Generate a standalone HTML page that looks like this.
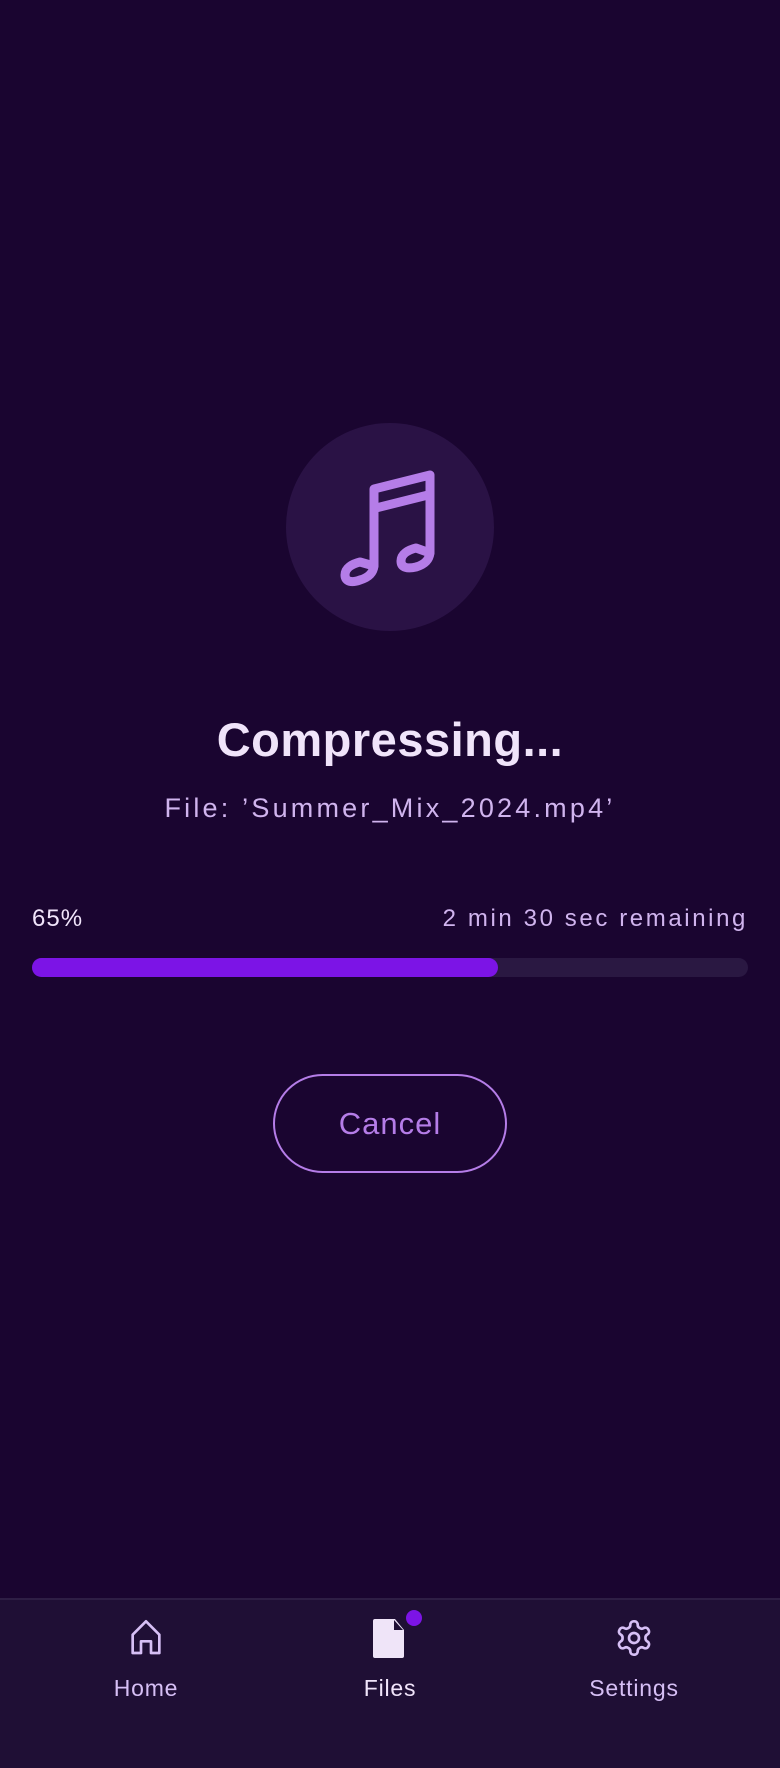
<!DOCTYPE html>
<html><head><meta charset="utf-8"><style>
*{margin:0;padding:0;box-sizing:border-box}
body{width:780px;height:1768px;background:#1a0530;font-family:"Liberation Sans",sans-serif;position:relative;overflow:hidden}
.circle{position:absolute;left:286px;top:423px;width:208px;height:208px;border-radius:50%;background:#2a1245}
.title{position:absolute;left:0;width:780px;top:712px;text-align:center;font-size:47px;font-weight:bold;color:#f0e4fa;letter-spacing:0.5px}
.sub{position:absolute;left:0;width:780px;top:793px;text-align:center;font-size:27px;color:#d0b4ee;letter-spacing:3.2px}
.pl{position:absolute;left:32px;top:905px;font-size:24px;color:#f0e4fa;letter-spacing:1px}
.pr{position:absolute;right:32px;top:905px;font-size:24px;color:#d0b4ee;letter-spacing:2.6px}
.bar{position:absolute;left:32px;top:958px;width:716px;height:19px;border-radius:10px;background:#2a1842}
.fill{position:absolute;left:0;top:0;width:466px;height:19px;border-radius:10px;background:#7c14e6}
.btn{position:absolute;left:273px;top:1074px;width:234px;height:99px;border:2px solid #b57de8;border-radius:50px;color:#b57de8;font-size:31px;text-align:center;line-height:95px;letter-spacing:1px}
.nav{position:absolute;left:0;top:1598px;width:780px;height:170px;background:#1f0f35;border-top:2px solid #2e1e45}
.item{position:absolute;top:18px;width:160px;text-align:center;font-size:23px;color:#d6bff5;letter-spacing:0.8px}
.item svg{display:block;margin:0 auto 17px}
</style></head><body>
<div class="circle"></div>
<svg style="position:absolute;left:0;top:0" width="780" height="700" fill="none" stroke="#b57de8" stroke-width="9" stroke-linecap="round" stroke-linejoin="round">
<path d="M374 566 V489 L430 475 V553"/>
<path d="M376 508 L428 495"/>
<path d="M374 566 C373 574 367 578 360 580 C352 583 345 582 345 575 C345 568 352 564 360 562 Z"/>
<path d="M430 553 C429 561 423 565 416 567 C408 569 401 568 401 561 C401 554 408 550 416 548 Z"/>
</svg>
<div class="title">Compressing...</div>
<div class="sub">File: ’Summer_Mix_2024.mp4’</div>
<div class="pl">65%</div>
<div class="pr">2 min 30 sec remaining</div>
<div class="bar"><div class="fill"></div></div>
<div class="btn">Cancel</div>
<div class="nav">
<div class="item" style="left:66px"><svg width="40" height="40" viewBox="0 0 24 24" fill="none" stroke="#d6bff5" stroke-width="1.6" stroke-linejoin="round"><path d="M4 21V10l8-8 8 8v11h-5v-7H9v7z"/></svg>Home</div>
<div class="item" style="left:310px;color:#f0e4fa"><svg width="40" height="40" viewBox="0 0 40 40"><path d="M5 1h20l9 11v26a2 2 0 0 1-2 2H5a2 2 0 0 1-2-2V3a2 2 0 0 1 2-2z" fill="#efe4f8"/><path d="M24 2v10h9z" fill="#1f0f35"/></svg>Files</div>
<div style="position:absolute;left:406px;top:10px;width:16px;height:16px;border-radius:50%;background:#7c14e6"></div>
<div class="item" style="left:554px"><svg width="40" height="40" viewBox="0 0 24 24" fill="none" stroke="#d6bff5" stroke-width="1.6" stroke-linejoin="round"><path d="M12.22 2h-.44a2 2 0 0 0-2 2v.18a2 2 0 0 1-1 1.730l-.43.25a2 2 0 0 1-2 0l-.15-.08a2 2 0 0 0-2.73.73l-.22.38a2 2 0 0 0 .73 2.73l.15.1a2 2 0 0 1 1 1.72v.51a2 2 0 0 1-1 1.74l-.15.09a2 2 0 0 0-.73 2.73l.22.38a2 2 0 0 0 2.73.73l.15-.08a2 2 0 0 1 2 0l.43.25a2 2 0 0 1 1 1.73V20a2 2 0 0 0 2 2h.44a2 2 0 0 0 2-2v-.18a2 2 0 0 1 1-1.73l.43-.25a2 2 0 0 1 2 0l.15.08a2 2 0 0 0 2.73-.73l.22-.39a2 2 0 0 0-.73-2.730l-.15-.08a2 2 0 0 1-1-1.74v-.5a2 2 0 0 1 1-1.74l.15-.09a2 2 0 0 0 .73-2.73l-.22-.38a2 2 0 0 0-2.73-.73l-.15.08a2 2 0 0 1-2 0l-.43-.25a2 2 0 0 1-1-1.73V4a2 2 0 0 0-2-2z"/><circle cx="12" cy="12" r="3"/></svg>Settings</div>
</div>
</body></html>
